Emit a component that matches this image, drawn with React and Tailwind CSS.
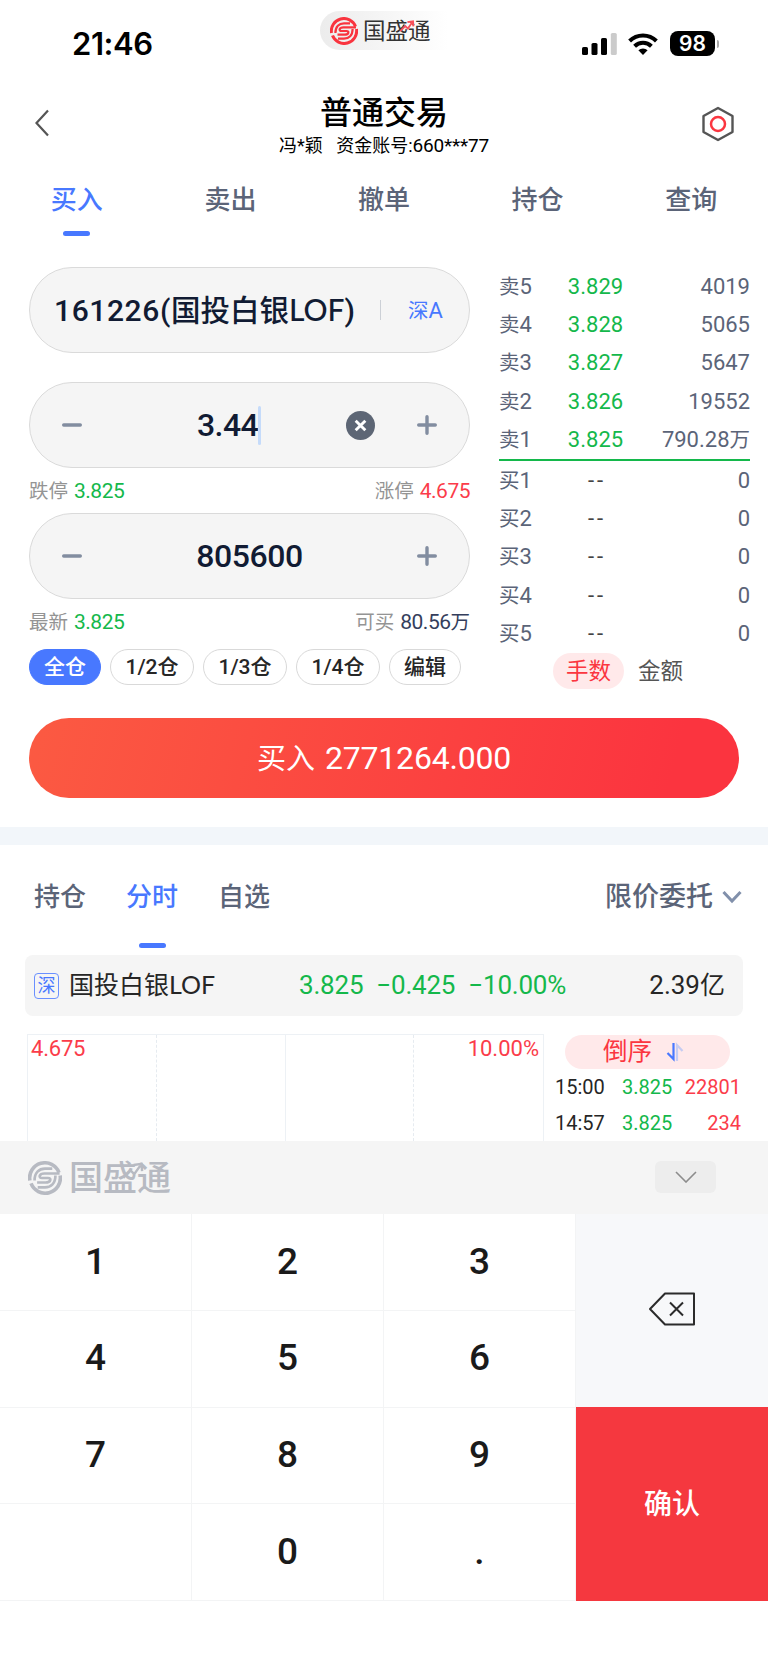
import React, { useState } from "react";

const sells = [
  ["5", "3.829", "4019"],
  ["4", "3.828", "5065"],
  ["3", "3.827", "5647"],
  ["2", "3.826", "19552"],
  ["1", "3.825", "790.28", "万"],
];

const buys = ["1", "2", "3", "4", "5"];

const LogoMark = ({ className }) => (
  <svg viewBox="0 0 28 28" className={className} fill="none" stroke="currentColor">
    <path d="M1.5 16A12.500 12.500 0 0 1 25.500 9.500" strokeWidth="3" />
    <path d="M26.500 12A12.500 12.500 0 0 1 2.500 18.500" strokeWidth="3" />
    <path d="M5.4 16C5.400 9.500 9 6.300 14 6.300H20" strokeWidth="2.200" />
    <path d="M22.600 12C22.600 18.500 19 21.700 14 21.700H8" strokeWidth="2.200" />
    <path d="M26 10.300H13.500C9 10.300 8.500 14 11.500 14H16.500C19.500 14 19 17.700 14.500 17.700H7.500" strokeWidth="2.200" />
  </svg>
);

const Minus = () => (
  <svg viewBox="0 0 20 20" className="w-5 h-5">
    <path d="M1.7 10h16.6" stroke="#828da0" strokeWidth="3.4" strokeLinecap="round" />
  </svg>
);

const Plus = () => (
  <svg viewBox="0 0 20 20" className="w-5 h-5">
    <path d="M1.7 10h16.6M10 1.7v16.6" stroke="#828da0" strokeWidth="3.4" strokeLinecap="round" />
  </svg>
);

const StatusBar = () => (
  <div className="h-[80px] flex justify-between items-start">
    <div className="w-[320px] pl-[72px] pt-[26px] font-['Inter'] text-[31px] leading-9 font-semibold tracking-[-0.4px] text-black">
      21:46
    </div>
    <div className="w-[128px] h-[39px] mt-[11px] pl-[10px] flex items-center rounded-l-full bg-linear-to-r from-[#ececec] to-white">
      <LogoMark className="w-7 h-7 text-[#f9343f]" />
      <span className="relative ml-[5px] text-[22.5px] leading-7 text-[#333]">
        国盛通
        <svg viewBox="0 0 18 14" className="absolute left-[36px] top-[3px] w-[16px] h-[12px]" fill="none">
          <path d="M1 13l6-6 3 3 5-7M9.500 2.500L16 1.500l.5 6" stroke="#f9505a" strokeWidth="2.200" />
        </svg>
      </span>
    </div>
    <div className="w-[320px] pt-[31px] pl-[134px] flex items-center">
      <svg viewBox="0 0 35 22" className="w-[35px] h-[22px]">
        <rect x="0" y="14" width="6" height="8" rx="1.6" />
        <rect x="9.5" y="10" width="6" height="12" rx="1.6" />
        <rect x="19" y="5" width="6" height="17" rx="1.6" />
        <rect x="28.8" y="0" width="6" height="22" rx="1.6" fill="#cbcbcb" />
      </svg>
      <svg viewBox="0 0 30 22" className="ml-[11px] w-[30px] h-[22px]" fill="none" stroke="black" strokeWidth="4">
        <path d="M1.6 8a19 19 0 0 1 26.8 0" />
        <path d="M6.6 13.2a12 12 0 0 1 16.8 0" />
        <path d="M15 22l-4.6-4.7a6.5 6.5 0 0 1 9.2 0z" fill="black" stroke="none" />
      </svg>
      <div className="ml-[12px] w-[45px] h-[25px] rounded-lg bg-black text-white font-['Inter'] font-semibold text-[21px] leading-[25px] text-center">
        98
      </div>
      <div className="ml-[2px] w-[2px] h-2 rounded-r-full bg-[#a8a8a8]" />
    </div>
  </div>
);

const Header = () => (
  <div className="h-[85px] flex justify-between items-start">
    <div className="w-[100px] pl-[35px] pt-[29px]">
      <svg viewBox="0 0 14 28" className="w-[14px] h-7" fill="none">
        <path d="M13 1.5L1.5 14 13 26.5" stroke="#555" strokeWidth="2.2" />
      </svg>
    </div>
    <div className="mt-[15px] text-center text-black">
      <h1 className="text-[32px] leading-9 font-medium">普通交易</h1>
      <p className="mt-[3px] text-[18px] leading-6 whitespace-pre">
        冯*颖{"   "}资金账号:<span className="text-[19px] tracking-[-0.2px]">660***77</span>
      </p>
    </div>
    <div className="w-[100px] pl-[34px] pt-[26px]">
      <svg viewBox="0 0 32 36" className="w-8 h-9" fill="none">
        <path d="M16 2l14.5 8v16L16 34 1.5 26V10z" stroke="#555" strokeWidth="2.4" strokeLinejoin="round" />
        <circle cx="16" cy="18" r="7" stroke="#fb3640" strokeWidth="2.5" />
      </svg>
    </div>
  </div>
);

const OrderRow = ({ side, level, price, amount, unit }) => (
  <div className="h-[38.4px] flex items-center text-[22px] text-[#5b6478]">
    <div className="w-[52px]">
      <span className="text-[20.5px]">{side}</span>
      {level}
    </div>
    <div className={`w-[89px] text-center ${price ? "text-[#14b84b]" : "text-[#444]"}`}>
      {price || <span className="ml-[3px] tracking-[3px]">--</span>}
    </div>
    <div className="flex-1 text-right">
      {amount}
      {unit && <span className="text-[20.5px]">{unit}</span>}
    </div>
  </div>
);

const App = () => {
  const [price, setPrice] = useState("3.44");
  const [chip, setChip] = useState("全仓");

  const press = (key) => setPrice(price + key);

  return (
    <div className="w-[768px] h-[1662px] overflow-hidden bg-white font-['Roboto','Noto_Sans_CJK_SC',sans-serif]">
      <StatusBar />
      <Header />

      {/* Main tabs */}
      <div className="h-[83px] grid grid-cols-5 text-[26px] leading-9 font-medium text-[#5b6478]">
        {["买入", "卖出", "撤单", "持仓", "查询"].map((tab, i) => (
          <div key={tab} className={`pt-[17px] flex flex-col items-center ${i === 0 ? "text-[#4878ff]" : ""}`}>
            {tab}
            {i === 0 && <div className="mt-[13px] w-[27px] h-[4.5px] rounded-full bg-[#4878ff]" />}
          </div>
        ))}
      </div>

      {/* Trade form and order book */}
      <div className="h-[470px] pl-[29px] pr-[18px] pt-[19px] flex justify-between">
        <div className="w-[441px]">
          <div className="h-[86px] rounded-full border border-[#dadada] bg-[#f5f5f5] flex items-center pl-[24px] text-[#111b33]">
            <span className="w-[305px] text-[30px] font-medium whitespace-nowrap">
              <span className="tracking-[0.6px]">161226(</span>
              <span className="text-[29.5px]">国投白银</span>
              <span className="font-['Lato'] text-[30px]">LOF</span>)
            </span>
            <span className="ml-[21px] w-px h-5 bg-[#ccd0d6]" />
            <span className="ml-[27px] text-[20.5px] text-[#4878ff]">
              深<span className="text-[22px]">A</span>
            </span>
          </div>

          <div className="mt-[29px] h-[86px] rounded-full border border-[#dadada] bg-[#f5f5f5] flex items-center pl-[32px] pr-[32px]">
            <Minus />
            <div className="ml-[115px] flex items-center text-[32px] font-medium text-[#111b33]">
              <span className="tracking-[-0.6px]">{price}</span>
              <span className="w-[3px] h-[39px] rounded-full bg-[#c5dbfa]" />
            </div>
            <svg viewBox="0 0 30 30" className="ml-auto w-[29px] h-[29px]" onClick={() => setPrice("")}>
              <circle cx="15" cy="15" r="15" fill="#5d6675" />
              <path d="M10 10l10 10M20 10L10 20" stroke="white" strokeWidth="3" />
            </svg>
            <div className="ml-[42px]">
              <Plus />
            </div>
          </div>

          <div className="h-[45px] pt-[2px] flex justify-between items-center text-[19.5px] text-[#949494]">
            <span>
              跌停<span className="ml-[6px] text-[21px] tracking-[-0.5px] text-[#14b84b]">3.825</span>
            </span>
            <span>
              涨停<span className="ml-[6px] text-[21px] tracking-[-0.5px] text-[#fb3c4a]">4.675</span>
            </span>
          </div>

          <div className="h-[86px] rounded-full border border-[#dadada] bg-[#f5f5f5] flex justify-between items-center px-[32px]">
            <Minus />
            <span className="text-[32px] font-medium tracking-[-0.4px] text-[#111b33]">805600</span>
            <Plus />
          </div>

          <div className="h-[45px] pt-[2px] flex justify-between items-center text-[19.5px] text-[#949494]">
            <span>
              最新<span className="ml-[6px] text-[21px] tracking-[-0.5px] text-[#14b84b]">3.825</span>
            </span>
            <span>
              可买
              <span className="ml-[6px] text-[#343e5c]">
                <span className="text-[21px] tracking-[-0.5px]">80.56</span>万
              </span>
            </span>
          </div>

          <div className="mt-[5px] w-[432px] flex justify-between text-[21px] font-medium">
            {["全仓", "1/2仓", "1/3仓", "1/4仓", "编辑"].map((name) => (
              <button
                key={name}
                onClick={() => setChip(name)}
                className={`h-9 rounded-full border leading-8 ${name.length > 2 ? "w-[84px]" : "w-[72px]"} ${
                  chip === name ? "bg-[#4878ff] border-[#4878ff] text-white" : "border-[#d9d9d9] text-[#262626]"
                }`}
              >
                {name}
              </button>
            ))}
          </div>
        </div>

        <div className="w-[251px]">
          {sells.map(([level, p, amount, unit]) => (
            <OrderRow key={level} side="卖" level={level} price={p} amount={amount} unit={unit} />
          ))}
          <div className="h-[2px] bg-[#14b84b]" />
          {buys.map((level) => (
            <OrderRow key={level} side="买" level={level} amount="0" />
          ))}
          <div className="flex pl-[54px] text-[22.5px] leading-9">
            <span className="w-[71px] rounded-full bg-[#ffe9ea] text-center text-[#fb3640]">手数</span>
            <span className="ml-[14px] text-[#555]">金额</span>
          </div>
        </div>
      </div>

      {/* Submit */}
      <div className="h-[109px] px-[29px]">
        <button className="w-full h-[80px] rounded-[40px] bg-linear-[105deg,#fb5a42,#fb343f_90%] text-white text-[29px]">
          买入<span className="ml-[10px] text-[32px] tracking-[-0.2px]">2771264.000</span>
        </button>
      </div>

      <div className="h-[18px] bg-[#f2f6fa]" />

      {/* Secondary tabs */}
      <div className="h-[110px] pt-[34px] px-[34px] flex text-[26px] leading-9 font-medium text-[#5b6478]">
        <span>持仓</span>
        <div className="ml-[40px] flex flex-col items-center text-[#4878ff]">
          分时
          <div className="mt-[28px] w-[27px] h-[4.5px] rounded-full bg-[#4878ff]" />
        </div>
        <span className="ml-[40px]">自选</span>
        <span className="ml-auto text-[27px]">限价委托</span>
        <svg viewBox="0 0 20 14" className="ml-[9px] -mr-[8px] mt-[11px] w-5 h-[14px]" fill="none">
          <path d="M1.5 2L10 11l8.500-9" stroke="#8190ab" strokeWidth="3" />
        </svg>
      </div>

      {/* Quote */}
      <div className="mx-[25px] h-[61px] rounded-lg bg-[#f5f5f5] pl-[9px] pr-[18px] flex items-center text-[26px] text-[#262626]">
        <span className="w-[25px] h-[26px] rounded-[4px] border border-[#6a90ff] text-center text-[18px] leading-[23px] text-[#4878ff]">深</span>
        <span className="ml-[10px] w-[230px] text-[25px]">
          国投白银<span className="font-['Lato'] text-[25px]">LOF</span>
        </span>
        <div className="flex gap-[13px] tracking-[-0.2px] text-[#14b84b]">
          <span>3.825</span>
          <span>−0.425</span>
          <span>−10.00%</span>
        </div>
        <span className="ml-auto">
          2.39<span className="text-[25px]">亿</span>
        </span>
      </div>

      {/* Chart and trades */}
      <div className="mt-[18px] ml-[27px] mr-[27px] h-[107px] flex">
        <div className="w-[517px] grid grid-cols-4 border border-b-0 border-[#edf1f5] text-[22px] leading-7 text-[#fb3c4a]">
          <div className="border-r border-dashed border-[#e6ebf0] pl-[3px] tracking-[-0.2px]">4.675</div>
          <div className="border-r border-[#edf1f5]" />
          <div className="border-r border-dashed border-[#e6ebf0]" />
          <div className="pr-[4px] text-right">10.00%</div>
        </div>
        <div className="ml-[11px] w-[186px] text-[20px]">
          <div className="mt-[1px] ml-[10px] w-[165px] h-[34px] rounded-full bg-[#ffe9ea] flex items-center pl-[38px] text-[24.5px] text-[#fb3640]">
            倒序
            <svg viewBox="0 0 18 20" className="ml-[14px] w-[18px] h-5" fill="none" strokeWidth="2.2">
              <path d="M7.500 1v16L1.500 11" stroke="#4878ff" />
              <path d="M11 19V3l5.500 6" stroke="#c6ccf2" />
            </svg>
          </div>
          {[
            ["15:00", "22801"],
            ["14:57", "234"],
          ].map(([time, amount]) => (
            <div key={time} className="h-9 flex items-center">
              <span className="w-[67px] text-[#262626]">{time}</span>
              <span className="text-[#14b84b]">3.825</span>
              <span className="ml-auto text-[#fb3c4a]">{amount}</span>
            </div>
          ))}
        </div>
      </div>

      {/* Keyboard */}
      <div className="h-[73px] bg-[#f5f5f5] flex items-center justify-between pl-[28px] pr-[52px]">
        <div className="flex items-center text-[#b7bac2]">
          <LogoMark className="w-[34px] h-[34px]" />
          <span className="relative ml-[7px] text-[34px] leading-10 font-medium">
            国盛通
            <svg viewBox="0 0 18 14" className="absolute left-[53px] top-[4px] w-[22px] h-[17px]" fill="none">
              <path d="M1 13l6-6 3 3 5-7M9.500 2.500L16 1.500l.5 6" stroke="currentColor" strokeWidth="2" />
            </svg>
          </span>
        </div>
        <div className="w-[61px] h-[32px] -mt-px rounded-md bg-[#ededed] flex items-center justify-center">
          <svg viewBox="0 0 22 12" className="w-[22px] h-3" fill="none">
            <path d="M1 1l10 10L21 1" stroke="#8c8c8c" strokeWidth="1.600" />
          </svg>
        </div>
      </div>
      <div className="h-[387px] flex">
        <div className="w-[576px] grid grid-cols-3 grid-rows-4 text-[37px] font-medium text-[#1a1a1a]">
          {["1", "2", "3", "4", "5", "6", "7", "8", "9", "", "0", "."].map((key) => (
            <button key={key} onClick={() => press(key)} className="pb-px border-r border-b border-[#f3f4f5]">
              {key}
            </button>
          ))}
        </div>
        <div className="w-[192px] flex flex-col">
          <button className="h-[193px] pb-[3px] bg-[#f7f8fa] flex items-center justify-center">
            <svg viewBox="0 0 48 34" className="w-12 h-[34px]" fill="none" stroke="#2b2b2b" strokeWidth="2">
              <path d="M2 17L17 1.500h29v31H17z" strokeLinejoin="round" />
              <path d="M22 10.500l13 13M35 10.500l-13 13" />
            </svg>
          </button>
          <button className="flex-1 pt-[2px] bg-[#f5383f] text-white text-[28px] font-medium">确认</button>
        </div>
      </div>
    </div>
  );
};

export default App;
